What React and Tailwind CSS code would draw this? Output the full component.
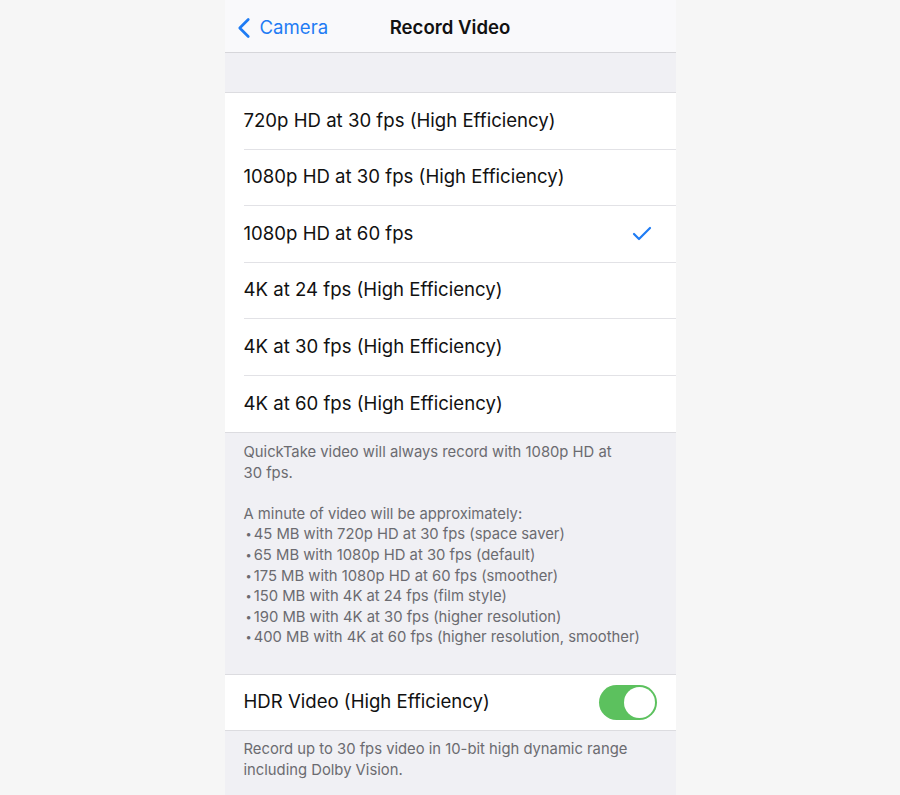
import { Check, ChevronLeft } from 'lucide-react';

const options = [
  '720p HD at 30 fps (High Efficiency)',
  '1080p HD at 30 fps (High Efficiency)',
  '1080p HD at 60 fps',
  '4K at 24 fps (High Efficiency)',
  '4K at 30 fps (High Efficiency)',
  '4K at 60 fps (High Efficiency)',
];

const sizes = [
  '45 MB with 720p HD at 30 fps (space saver)',
  '65 MB with 1080p HD at 30 fps (default)',
  '175 MB with 1080p HD at 60 fps (smoother)',
  '150 MB with 4K at 24 fps (film style)',
  '190 MB with 4K at 30 fps (higher resolution)',
  '400 MB with 4K at 60 fps (higher resolution, smoother)',
];

export default function App() {
  const selected = 2;

  return (
    <div className="w-full h-[795px] bg-[#f6f6f6] flex justify-center overflow-hidden font-['Inter',sans-serif]">
      <div className="w-[451px] bg-[#f0f0f4] flex flex-col">
        {/* nav bar */}
        <div className="h-[53px] pt-[4px] bg-[#f9f9fb] border-b border-[#d6d6da] relative flex items-center justify-center">
          <div className="absolute left-[2px] top-[4px] bottom-0 flex items-center text-[#1f7cf4]">
            <ChevronLeft size={34} strokeWidth={1.9} />
            <span className="text-[18.6px] -ml-[1px]">Camera</span>
          </div>
          <span className="text-[18.6px] font-semibold text-[#111]">Record Video</span>
        </div>

        <div className="h-[40px] border-b border-[#dcdce0]" />

        {/* options */}
        <div className="bg-white">
          {options.map((opt, i) => (
            <div key={opt} className="pl-[19px]">
              <div
                className={`h-[56.5px] flex items-center justify-between pr-[22px] ${
                  i < options.length - 1 ? 'border-b border-[#e2e2e6]' : ''
                }`}
              >
                <span className="text-[18.6px] text-[#111]">{opt}</span>
                {i === selected && <Check size={24} strokeWidth={2.2} className="text-[#1f7cf4]" />}
              </div>
            </div>
          ))}
        </div>

        {/* footer */}
        <div className="border-t border-[#dcdce0] px-[19px] pt-[9px] pb-[26px] text-[14.8px] leading-[20.6px] text-[#6b6b70]">
          <p>
            QuickTake video will always record with 1080p HD at
            <br />
            30 fps.
          </p>
          <p className="mt-[20.6px]">A minute of video will be approximately:</p>
          {sizes.map((s) => (
            <p key={s}>
              <span className="text-[11px] align-[1px] mx-[2px]">•</span>
              {s}
            </p>
          ))}
        </div>

        {/* HDR */}
        <div className="bg-white border-y border-[#dcdce0] h-[57px] pl-[19px] pr-[19px] flex items-center justify-between">
          <span className="text-[18.6px] text-[#111]">HDR Video (High Efficiency)</span>
          <div className="w-[58px] h-[35px] rounded-full bg-[#5cc15e] relative">
            <div className="absolute right-[2px] top-[2px] w-[31px] h-[31px] rounded-full bg-white" />
          </div>
        </div>

        <div className="px-[19px] pt-[8px] text-[14.8px] leading-[20.6px] text-[#6b6b70]">
          <p>
            Record up to 30 fps video in 10-bit high dynamic range
            <br />
            including Dolby Vision.
          </p>
        </div>
      </div>
    </div>
  );
}
